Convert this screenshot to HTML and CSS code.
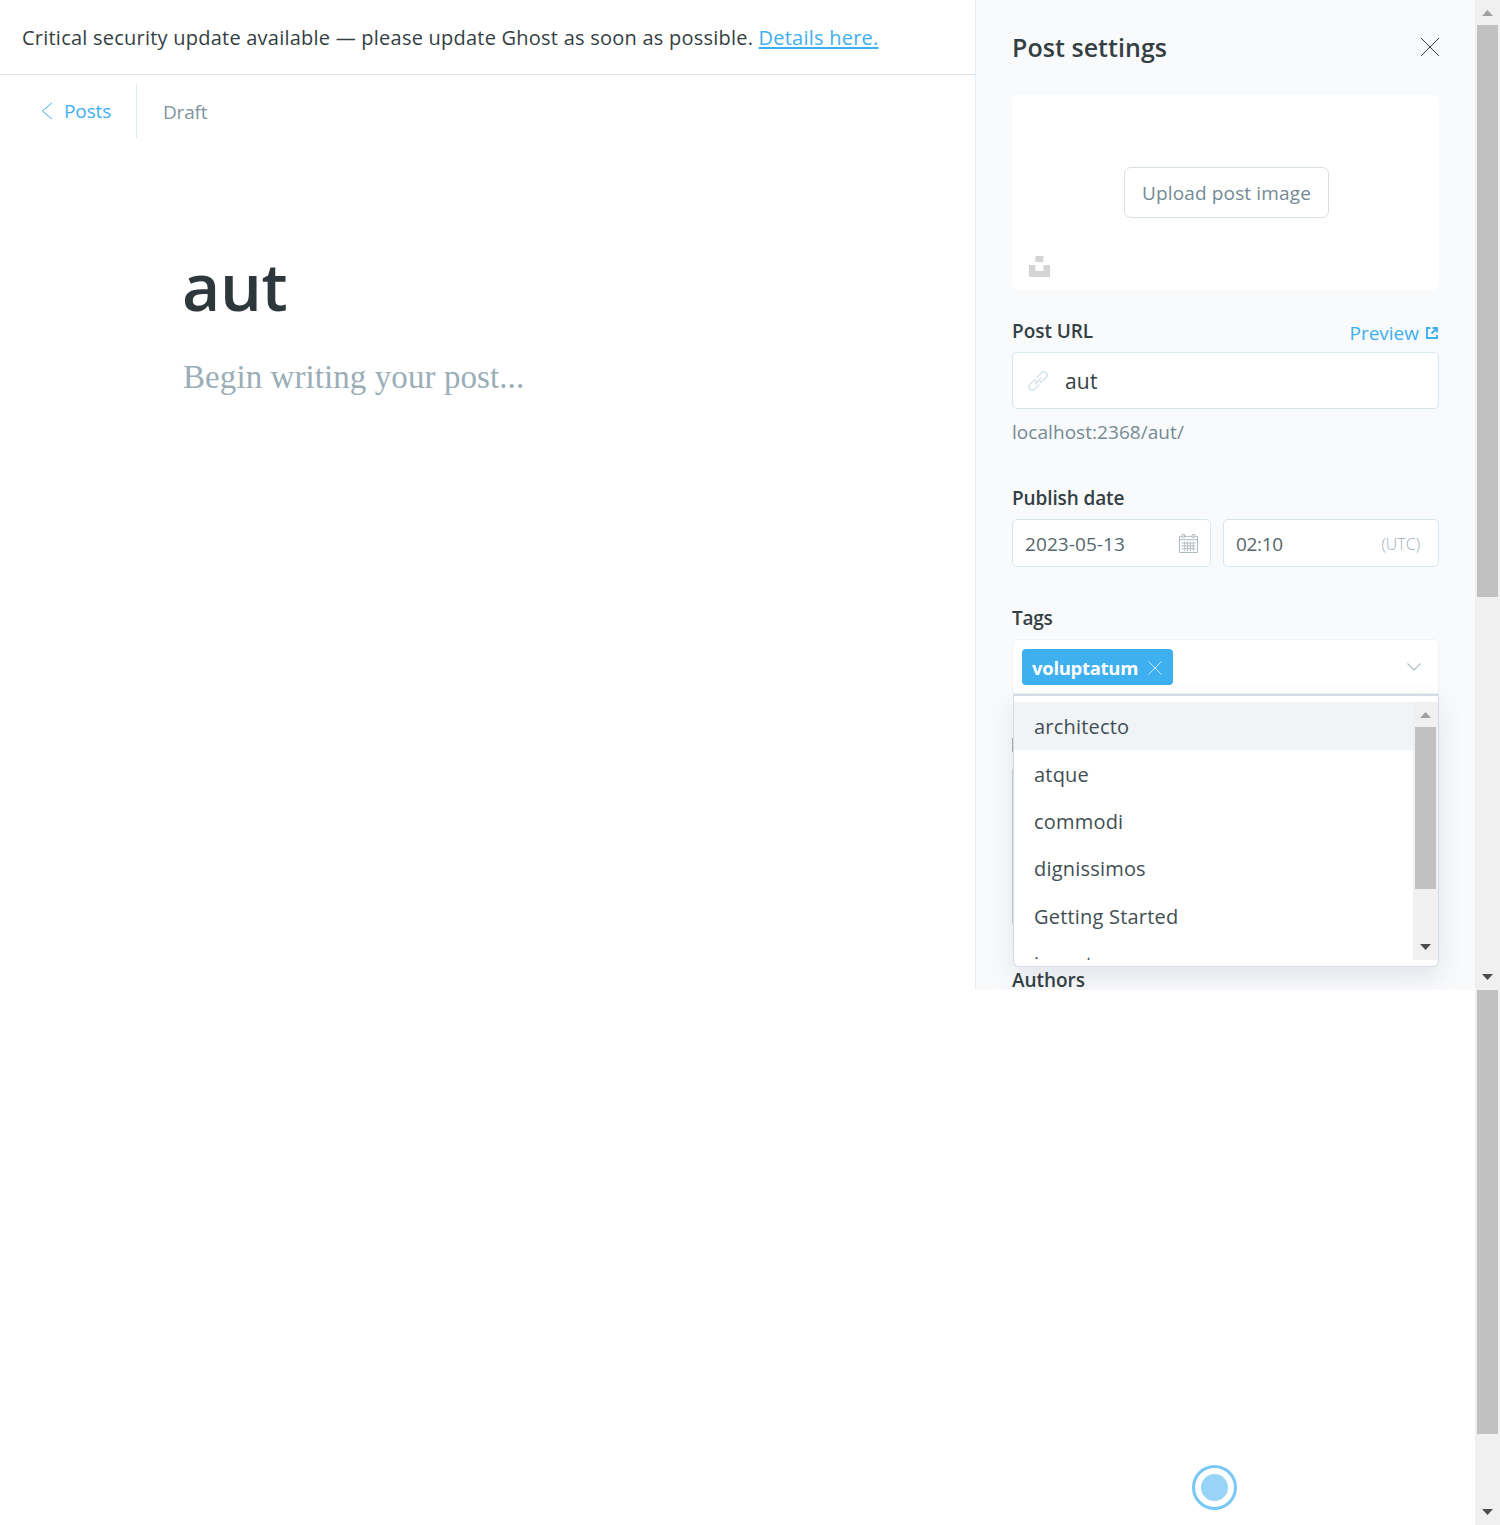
FILE: index.html
```
<!DOCTYPE html>
<html lang="en">
<head>
<meta charset="utf-8">
<title>Post settings</title>
<link rel="stylesheet" href="styles.css">
</head>
<body>
<div class="app">
  <div class="workspace">
    <main class="editor">
      <div class="alert"><span>Critical security update available — please update Ghost as soon as possible. <a class="alert-link" href="#">Details here.</a></span></div>
      <header class="editor-nav">
        <a class="back" href="#">
          <svg class="back-icon" viewBox="0 0 12 20"><path d="M12 1 1.500 10 12 19" fill="none" stroke="currentColor" stroke-width="1.1"/></svg>
          <span>Posts</span>
        </a>
        <span class="status">Draft</span>
      </header>
      <article class="post">
        <h1 class="post-title">aut</h1>
        <p class="post-placeholder">Begin writing your post...</p>
      </article>
    </main>
    <aside class="settings">
      <header class="settings-head">
        <h2 class="settings-title">Post settings</h2>
        <svg class="close" viewBox="0 0 18 18"><path d="M0 0 18 18M18 0 0 18" stroke="currentColor" stroke-width="1"/></svg>
      </header>
      <div class="uploader">
        <button class="upload-btn">Upload post image</button>
        <svg class="unsplash" viewBox="0 0 21 21"><path d="M6.500 0h8v6h-8zM0 9h6.500v6h8V9H21v12H0z" fill="currentColor"/></svg>
      </div>
      <div class="label-row url-label">
        <label class="label">Post URL</label>
        <a class="preview" href="#"><span>Preview</span>
          <svg class="external" viewBox="0 0 12 12"><path d="M4.500 1H1v10h10V8M6.500 1H11v4.500M10.500 1.500 5.500 6.500" fill="none" stroke="currentColor" stroke-width="1.900"/></svg></a>
      </div>
      <div class="input url-input">
        <svg class="link-icon" viewBox="0 0 20 20" fill="none" stroke="currentColor" stroke-width="1.300"><g transform="rotate(-45 10 10)"><path d="M8.500 13.300H1.500a3 3 0 0 1-3-3v-.600a3 3 0 0 1 3-3h5a3 3 0 0 1 2.700 1.700M11.500 6.700h7a3 3 0 0 1 3 3v.600a3 3 0 0 1-3 3h-5a3 3 0 0 1-2.700-1.700M5.500 10h9"/></g></svg>
        <span>aut</span>
      </div>
      <p class="help">localhost:2368/aut/</p>
      <div class="label-row date-label"><label class="label date-text">Publish date</label></div>
      <div class="date-row">
        <div class="input date-input"><span class="date-value">2023-05-13</span>
          <svg class="calendar" viewBox="0 0 20 20" fill="none" stroke="currentColor"><path d="M3.500 2.500h-3v17h19v-17h-3M6 2.500h8M.500 6h19" /><path d="M3.500.500h2.500v3H3.500zM14 .500h2.500v3H14z"/><path d="M2.500 9.500h15M2.500 12.500h15M2.500 15.500h15M6 8v10M9 8v10M12 8v10M15 8v10" stroke-width=".900"/></svg>
        </div>
        <div class="input time-input"><span class="time-value">02:10</span><span class="zone">(UTC)</span></div>
      </div>
      <div class="label-row tags-label"><label class="label tags-text">Tags</label></div>
      <div class="select">
        <div class="trigger">
          <span class="tag"><span>voluptatum</span><svg class="tag-x" viewBox="0 0 14 14"><path d="M.5.5l13 13M13.500.500l-13 13" stroke="currentColor"/></svg></span>
          <svg class="chevron" viewBox="0 0 14 8"><path d="M.5.5 7 7 13.500.500" fill="none" stroke="currentColor" stroke-width="1.100"/></svg>
        </div>
        <div class="dropdown">
          <div class="options">
            <div class="option active">architecto</div>
            <div class="option">atque</div>
            <div class="option">commodi</div>
            <div class="option">dignissimos</div>
            <div class="option">Getting Started</div>
            <div class="option">inventore</div>
          </div>
          <div class="bar list-bar"><i class="arrow up"></i><i class="thumb"></i><i class="arrow down"></i></div>
        </div>
      </div>
      <div class="excerpt"></div>
      <div class="authors"><label class="label">Authors</label></div>
    </aside>
    <div class="bar panel-bar"><i class="arrow up"></i><i class="thumb"></i><i class="arrow down"></i></div>
  </div>
  <div class="below">
    <div class="canvas"><span class="pulse"></span></div>
    <div class="bar page-bar"><i class="thumb"></i><i class="arrow down"></i></div>
  </div>
</div>
</body>
</html>
```
FILE: styles.css
```
* { box-sizing: border-box; }
body { margin: 0; background: #fff; color: #343f44; font-family: "Open Sans", "Noto Sans", sans-serif; font-size: 19px; }
h1, h2, p { margin: 0; }
a { color: #3eb0ef; text-decoration: none; }
svg { display: block; flex: none; overflow: visible; }
.app { width: 1500px; height: 1525px; display: flex; flex-direction: column; overflow: hidden; }
.workspace { display: grid; grid-template-columns: 975px 500px 25px; height: 990px; }
.below { display: grid; grid-template-columns: 1475px 25px; height: 535px; }

.alert { height: 75px; padding: 0 0 0 22px; display: flex; align-items: center; border-bottom: 1px solid #dddfe0; font-size: 20px; letter-spacing: .23px; white-space: nowrap; }
.alert-link { text-decoration: underline; text-decoration-thickness: 2px; text-underline-offset: 2px; }
.editor-nav { display: flex; align-items: center; height: 63px; padding-top: 9px; }
.back { display: flex; align-items: center; gap: 12px; width: 137px; height: 54px; padding-left: 41px; border-right: 1px solid #dfebf3; letter-spacing: -.1px; }
.back-icon { width: 11px; height: 18px; }
.status { padding: 1px 0 0 26px; color: #7f959e; letter-spacing: -.2px; }
.post { padding: 102px 183px 0; }
.post-title { height: 90px; line-height: 90px; font-size: 66px; font-weight: 600; letter-spacing: -.4px; text-indent: -1px; color: #2d373c; }
.post-placeholder { margin-top: 27px; height: 40px; line-height: 40px; font-family: Georgia, "Liberation Serif", serif; font-size: 33px; letter-spacing: .08px; color: #9baeb8; white-space: nowrap; }

.settings { height: 990px; padding: 0 36px; background: #f9fafc; border-left: 1px solid #e3eef7; overflow: hidden; }
.settings-head { height: 95px; padding-bottom: 1px; display: flex; align-items: center; justify-content: space-between; }
.settings-title { font-size: 25px; font-weight: 600; line-height: 30px; letter-spacing: .05px; }
.close { width: 18px; height: 18px; color: #343f44; }
.uploader { position: relative; height: 195px; border-radius: 6px; background: #fff; display: flex; align-items: center; justify-content: center; }
.upload-btn { width: 205px; height: 51px; margin-left: 2px; padding: 0; background: #fff; border: 1px solid #d4e0e4; border-radius: 7px; font: inherit; letter-spacing: .15px; color: #738a94; white-space: nowrap; }
.unsplash { position: absolute; left: 17px; bottom: 13px; width: 21px; height: 21px; color: #d4d4d4; }
.label { display: block; font-size: 19px; font-weight: 600; line-height: 26px; letter-spacing: -.05px; }
.label-row { display: flex; justify-content: space-between; }
.url-label { height: 62px; padding-top: 28px; }
.preview { display: flex; align-items: center; gap: 7px; height: 26px; margin-top: 2px; }
.external { width: 12px; height: 12px; margin: 0 1px 1px 0; }
.input { display: flex; align-items: center; background: #fff; border: 1px solid #dae6ed; border-radius: 5px; }
.url-input { height: 57px; padding: 1px 0 0 15px; gap: 17px; font-size: 21px; letter-spacing: .2px; }
.link-icon { width: 20px; height: 20px; color: #cfdfe9; }
.help { height: 76px; padding-top: 10px; line-height: 26px; letter-spacing: .05px; color: #738a94; }
.date-label { height: 34px; }
.date-text { letter-spacing: -.12px; }
.date-row { display: grid; grid-template-columns: 199px 216px; gap: 12px; height: 48px; color: #54666d; }
.date-input, .time-input { justify-content: space-between; padding: 0 12px; }
.date-value { padding-top: 1px; letter-spacing: .08px; }
.time-value { padding-top: 1px; letter-spacing: -.35px; }
.time-input { padding-right: 18px; }
.calendar { width: 19px; height: 19px; color: #a9b7be; }
.zone { padding-top: 1px; font-size: 16px; font-weight: 300; color: #a2b0b7; }
.tags-label { height: 72px; padding-top: 38px; }
.tags-text { letter-spacing: -.3px; }
.select { position: relative; height: 55px; }
.trigger { display: flex; align-items: center; justify-content: space-between; height: 55px; padding: 0 17px 0 9px; background: #fff; border: 1px solid #eff3f6; border-radius: 5px 5px 0 0; }
.tag { display: flex; align-items: center; gap: 10px; width: 151px; height: 36px; padding: 2px 0 0 10px; border-radius: 4px; background: #3eb0ef; color: #fff; font-size: 18.500px; font-weight: 700; letter-spacing: -.3px; }
.tag-x { width: 14px; height: 14px; color: #c5e7fa; }
.chevron { width: 14px; height: 8px; color: #aebdc4; }
.dropdown { position: absolute; z-index: 2; left: 1px; top: 55px; width: 426px; height: 273px; padding: 6px 0; display: grid; grid-template-columns: 399px 25px; grid-template-rows: 258px; background: #fff; border: 1px solid #d5dce3; border-top: 2px solid #d5dce6; border-radius: 0 0 6px 6px; box-shadow: 0 10px 26px rgba(60, 85, 110, .13); }
.options { height: 258px; overflow: hidden; }
.option { height: 47.300px; padding: 1px 0 0 20px; display: flex; align-items: center; font-size: 20px; letter-spacing: .2px; color: #414e54; }
.option.active { height: 48px; background: #f0f4f7; }
.excerpt { position: relative; height: 161px; margin-top: 72px; border: 1px solid #c2d3df; border-radius: 5px; background: #fff; }
.excerpt::before { content: ""; position: absolute; left: -1px; top: -29px; width: 1px; height: 14px; background: #a7afb5; }
.authors { padding-top: 40px; }

.bar { position: relative; background: #f0f0f0; display: flex; flex-direction: column; align-items: center; }
.thumb { width: 21px; background: #c1c1c1; }
.arrow { width: 11px; height: 6px; }
.up { margin: 10px 0 9px; background: #a0a0a0; clip-path: polygon(50% 0, 100% 100%, 0 100%); }
.down { position: absolute; bottom: 10px; background: #4d4d4d; clip-path: polygon(0 0, 100% 0, 50% 100%); }
.panel-bar .thumb { height: 572px; }
.list-bar .thumb { height: 162px; }
.page-bar .thumb { height: 444px; }
.canvas { display: flex; align-items: flex-end; justify-content: flex-end; padding: 0 238px 15px 0; }
.pulse { width: 45px; height: 45px; border: 3px solid #77c8f4; border-radius: 50%; padding: 6px; background: #98d4f8 content-box; }
```
